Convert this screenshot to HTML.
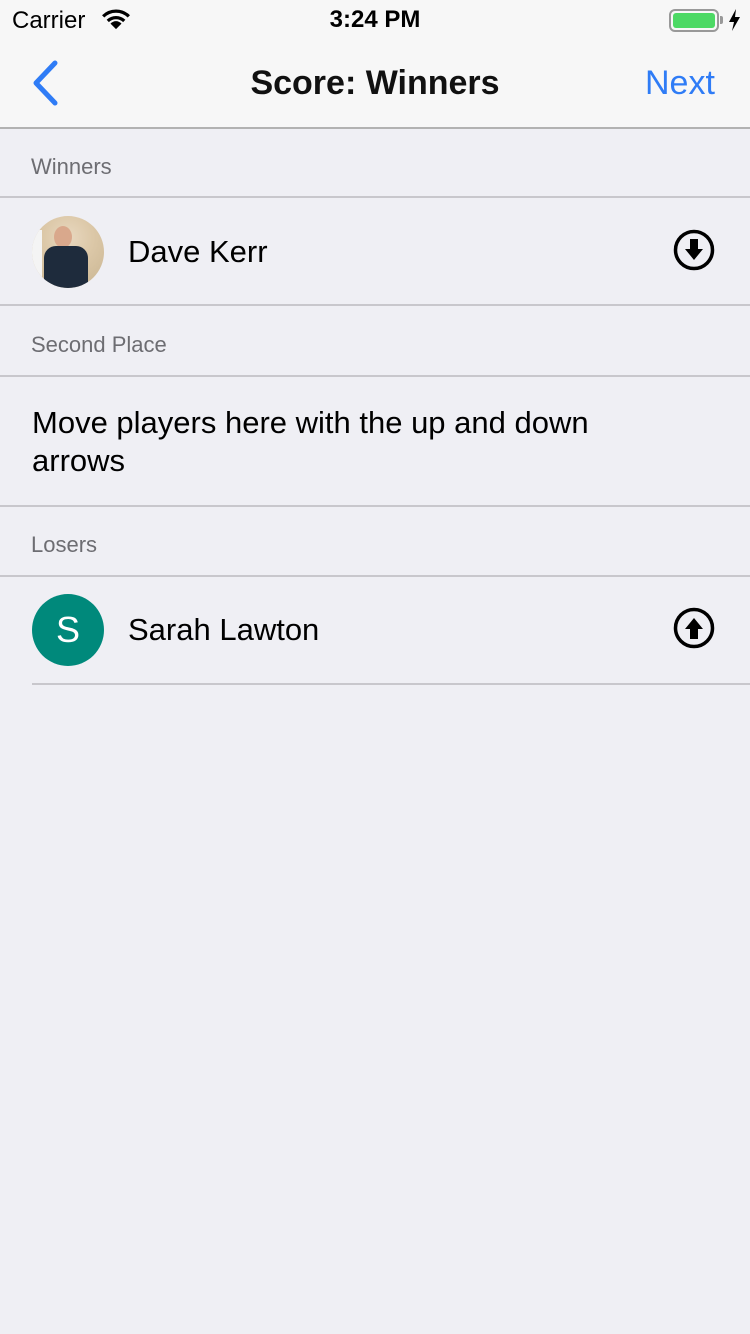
<!DOCTYPE html>
<html><head><meta charset="utf-8"><style>
*{margin:0;padding:0;box-sizing:border-box}
body{width:750px;height:1334px;background:#efeff4;font-family:"Liberation Sans",Helvetica,Arial,sans-serif;position:relative;overflow:hidden;color:#000}
.a{position:absolute}
.line{position:absolute;height:2px;background:#c8c7cc;right:0}
.hdr{position:absolute;left:31px;font-size:22px;color:#6d6d72}
</style></head><body>
<div class="a" style="left:0;top:0;width:750px;height:128px;background:#f7f7f7"></div>
<div class="line" style="left:0;top:127px;background:#b2b2b2"></div>
<div class="a" style="left:12px;top:7px;font-size:24px">Carrier</div>
<svg class="a" style="left:101px;top:9px" width="30" height="22" viewBox="0 0 32 24"><path d="M2 8 A20 20 0 0 1 30 8" stroke="#000" stroke-width="3.5" fill="none"/><path d="M7 13 A13 13 0 0 1 25 13" stroke="#000" stroke-width="3.5" fill="none"/><path d="M16 22 L10 16 A8 8 0 0 1 22 16 Z" fill="#000"/></svg>
<div class="a" style="left:0;width:750px;text-align:center;top:6px;font-size:24px;font-weight:bold">3:24 PM</div>
<div class="a" style="left:669px;top:9px;width:50px;height:23px;border:2px solid #999;border-radius:6px;padding:2px"><div style="width:100%;height:100%;background:#4cd964;border-radius:3px"></div></div>
<div class="a" style="left:720px;top:16px;width:3px;height:8px;background:#999;border-radius:0 2px 2px 0"></div>
<svg class="a" style="left:728px;top:9px" width="13" height="22" viewBox="0 0 13 22"><path d="M8 0 L1 13 L6 13 L4 22 L12 8 L7 8 Z" fill="#000"/></svg>
<svg class="a" style="left:30px;top:60px" width="30" height="46" viewBox="0 0 30 46"><path d="M25 3 L6 23 L25 43" stroke="#2f7cf6" stroke-width="5" fill="none" stroke-linecap="round" stroke-linejoin="round"/></svg>
<div class="a" style="left:0;width:750px;text-align:center;top:64px;font-size:34px;font-weight:bold;color:#111">Score: Winners</div>
<div class="a" style="left:645px;top:64px;font-size:34px;color:#2f7cf6">Next</div>

<div class="hdr" style="top:154px">Winners</div>
<div class="line" style="left:0;top:196px"></div>
<div class="a" style="left:32px;top:216px;width:72px;height:72px;border-radius:50%;background:radial-gradient(circle at 50% 30%,#e8d8c0 0,#dcc8a8 40%,#c8b490 100%);overflow:hidden">
<div class="a" style="left:22px;top:10px;width:18px;height:22px;border-radius:50%;background:#d9a88c"></div>
<div class="a" style="left:12px;top:30px;width:44px;height:44px;border-radius:12px 12px 0 0;background:#1e2b3c"></div>
<div class="a" style="left:0;top:14px;width:10px;height:50px;background:#f4f4f4"></div>
</div>
<div class="a" style="left:128px;top:234px;font-size:31px">Dave Kerr</div>
<svg class="a" style="left:672px;top:228px" width="44" height="44" viewBox="0 0 44 44"><circle cx="22" cy="22" r="18.5" stroke="#000" stroke-width="3.5" fill="none"/><path d="M18 11 H26 V21 H31 L22 32 L13 21 H18 Z" fill="#000"/></svg>
<div class="line" style="left:0;top:304px"></div>

<div class="hdr" style="top:332px">Second Place</div>
<div class="line" style="left:0;top:375px"></div>
<div class="a" style="left:32px;top:404px;font-size:31px;line-height:38px;width:620px">Move players here with the up and down arrows</div>
<div class="line" style="left:0;top:505px"></div>

<div class="hdr" style="top:532px">Losers</div>
<div class="line" style="left:0;top:575px"></div>
<div class="a" style="left:32px;top:594px;width:72px;height:72px;border-radius:50%;background:#00897b;color:#fff;font-size:36px;text-align:center;line-height:72px">S</div>
<div class="a" style="left:128px;top:612px;font-size:31px">Sarah Lawton</div>
<svg class="a" style="left:672px;top:606px" width="44" height="44" viewBox="0 0 44 44"><circle cx="22" cy="22" r="18.5" stroke="#000" stroke-width="3.5" fill="none"/><path d="M18 33 H26 V23 H31 L22 12 L13 23 H18 Z" fill="#000"/></svg>
<div class="line" style="left:32px;top:683px"></div>
</body></html>
